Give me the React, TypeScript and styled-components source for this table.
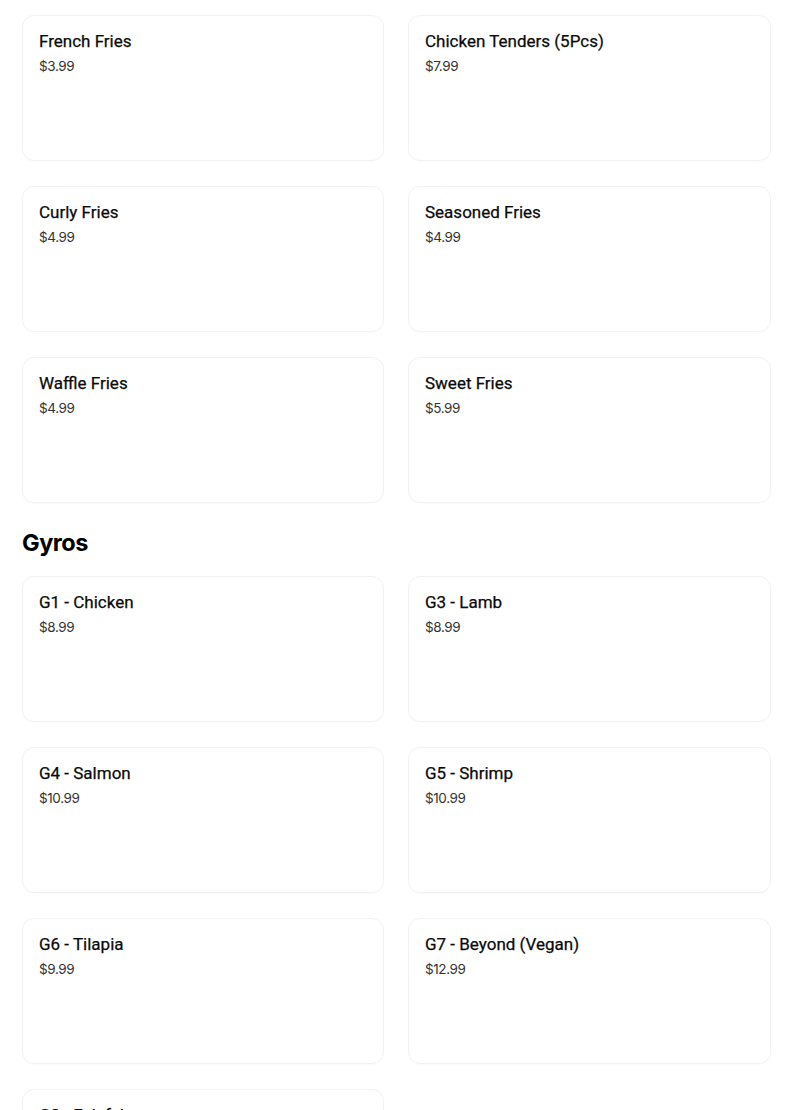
import styled, { createGlobalStyle } from "styled-components";

const GlobalStyle = createGlobalStyle`
  body {
    margin: 0;
    background: #ffffff;
    font-family: Inter, "Noto Sans", "Liberation Sans", sans-serif;
    color: #000000;
  }
`;

const Page = styled.div`
  padding: 15px 33px 0 22px;
  height: 1110px;
  overflow: hidden;
`;

const Section = styled.section`
  display: flex;
  flex-direction: column;
`;

const Heading = styled.h2`
  margin: 24px 0 17px;
  font-size: 23.5px;
  line-height: 32px;
  font-weight: 700;
  letter-spacing: -0.5px;
`;

const Grid = styled.div`
  display: grid;
  grid-template-columns: 362px 363px;
  column-gap: 24px;
  row-gap: 25px;
`;

const Card = styled.div`
  height: 146px;
  box-sizing: border-box;
  border: 1px solid #f2f2f2;
  border-radius: 12px;
  padding: 15px 16px;
  box-shadow: 0 1px 2px rgba(0, 0, 0, 0.02);
`;

const Name = styled.div`
  font-family: Roboto, Inter, sans-serif;
  font-size: 17px;
  line-height: 20px;
  font-weight: 400;
  color: #0a0a0a;
  -webkit-text-stroke: 0.25px #0a0a0a;
`;

const Price = styled.div`
  margin-top: 5px;
  font-size: 13.5px;
  line-height: 20px;
  color: #333333;
  letter-spacing: -0.4px;
`;

type Item = { name: string; price: string };

const sides: Item[] = [
  { name: "French Fries", price: "$3.99" },
  { name: "Chicken Tenders (5Pcs)", price: "$7.99" },
  { name: "Curly Fries", price: "$4.99" },
  { name: "Seasoned Fries", price: "$4.99" },
  { name: "Waffle Fries", price: "$4.99" },
  { name: "Sweet Fries", price: "$5.99" },
];

const gyros: Item[] = [
  { name: "G1 - Chicken", price: "$8.99" },
  { name: "G3 - Lamb", price: "$8.99" },
  { name: "G4 - Salmon", price: "$10.99" },
  { name: "G5 - Shrimp", price: "$10.99" },
  { name: "G6 - Tilapia", price: "$9.99" },
  { name: "G7 - Beyond (Vegan)", price: "$12.99" },
  { name: "G8 - Falafel", price: "$8.99" },
];

const ItemCard = ({ item }: { item: Item }) => (
  <Card>
    <Name>{item.name}</Name>
    <Price>{item.price}</Price>
  </Card>
);

export default function App() {
  return (
    <>
      <GlobalStyle />
      <Page>
        <Section>
          <Grid>
            {sides.map((it) => (
              <ItemCard key={it.name} item={it} />
            ))}
          </Grid>
        </Section>
        <Section>
          <Heading>Gyros</Heading>
          <Grid>
            {gyros.map((it) => (
              <ItemCard key={it.name} item={it} />
            ))}
          </Grid>
        </Section>
      </Page>
    </>
  );
}
